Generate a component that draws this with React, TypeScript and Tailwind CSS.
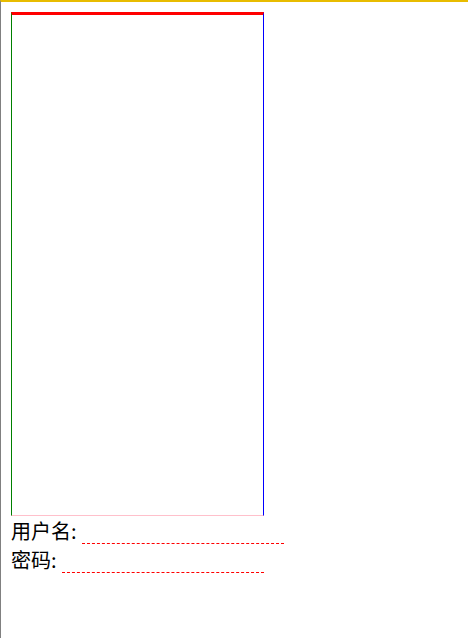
import React from "react";

export default function App() {
  return (
    <div
      className="w-[468px] h-[638px] bg-white border-l border-l-[#808080] border-t-2 border-t-[#e8bc00] pl-[10px] pt-[10px] text-black"
      style={{ fontFamily: '"Noto Sans CJK SC", "Noto Sans", sans-serif' }}
    >
      <div className="w-[253px] h-[504px] border-l border-l-[#008000] border-t-[3px] border-t-[#ff0000] border-r border-r-[#0000ff] border-b border-b-[#ffc0cb]" />
      <div className="flex h-[29px] items-end">
        <span className="w-[71px] self-stretch text-[20px] leading-[29px]">用户名:</span>
        <input
          className="w-[202px] h-[20px] mb-[1px] bg-transparent border-0 border-b border-dashed border-b-[#ff0000] outline-none"
          type="text"
        />
      </div>
      <div className="flex h-[29px] items-end">
        <span className="w-[51px] self-stretch text-[20px] leading-[29px]">密码:</span>
        <input
          className="w-[202px] h-[20px] mb-[1px] bg-transparent border-0 border-b border-dashed border-b-[#ff0000] outline-none"
          type="password"
        />
      </div>
    </div>
  );
}
